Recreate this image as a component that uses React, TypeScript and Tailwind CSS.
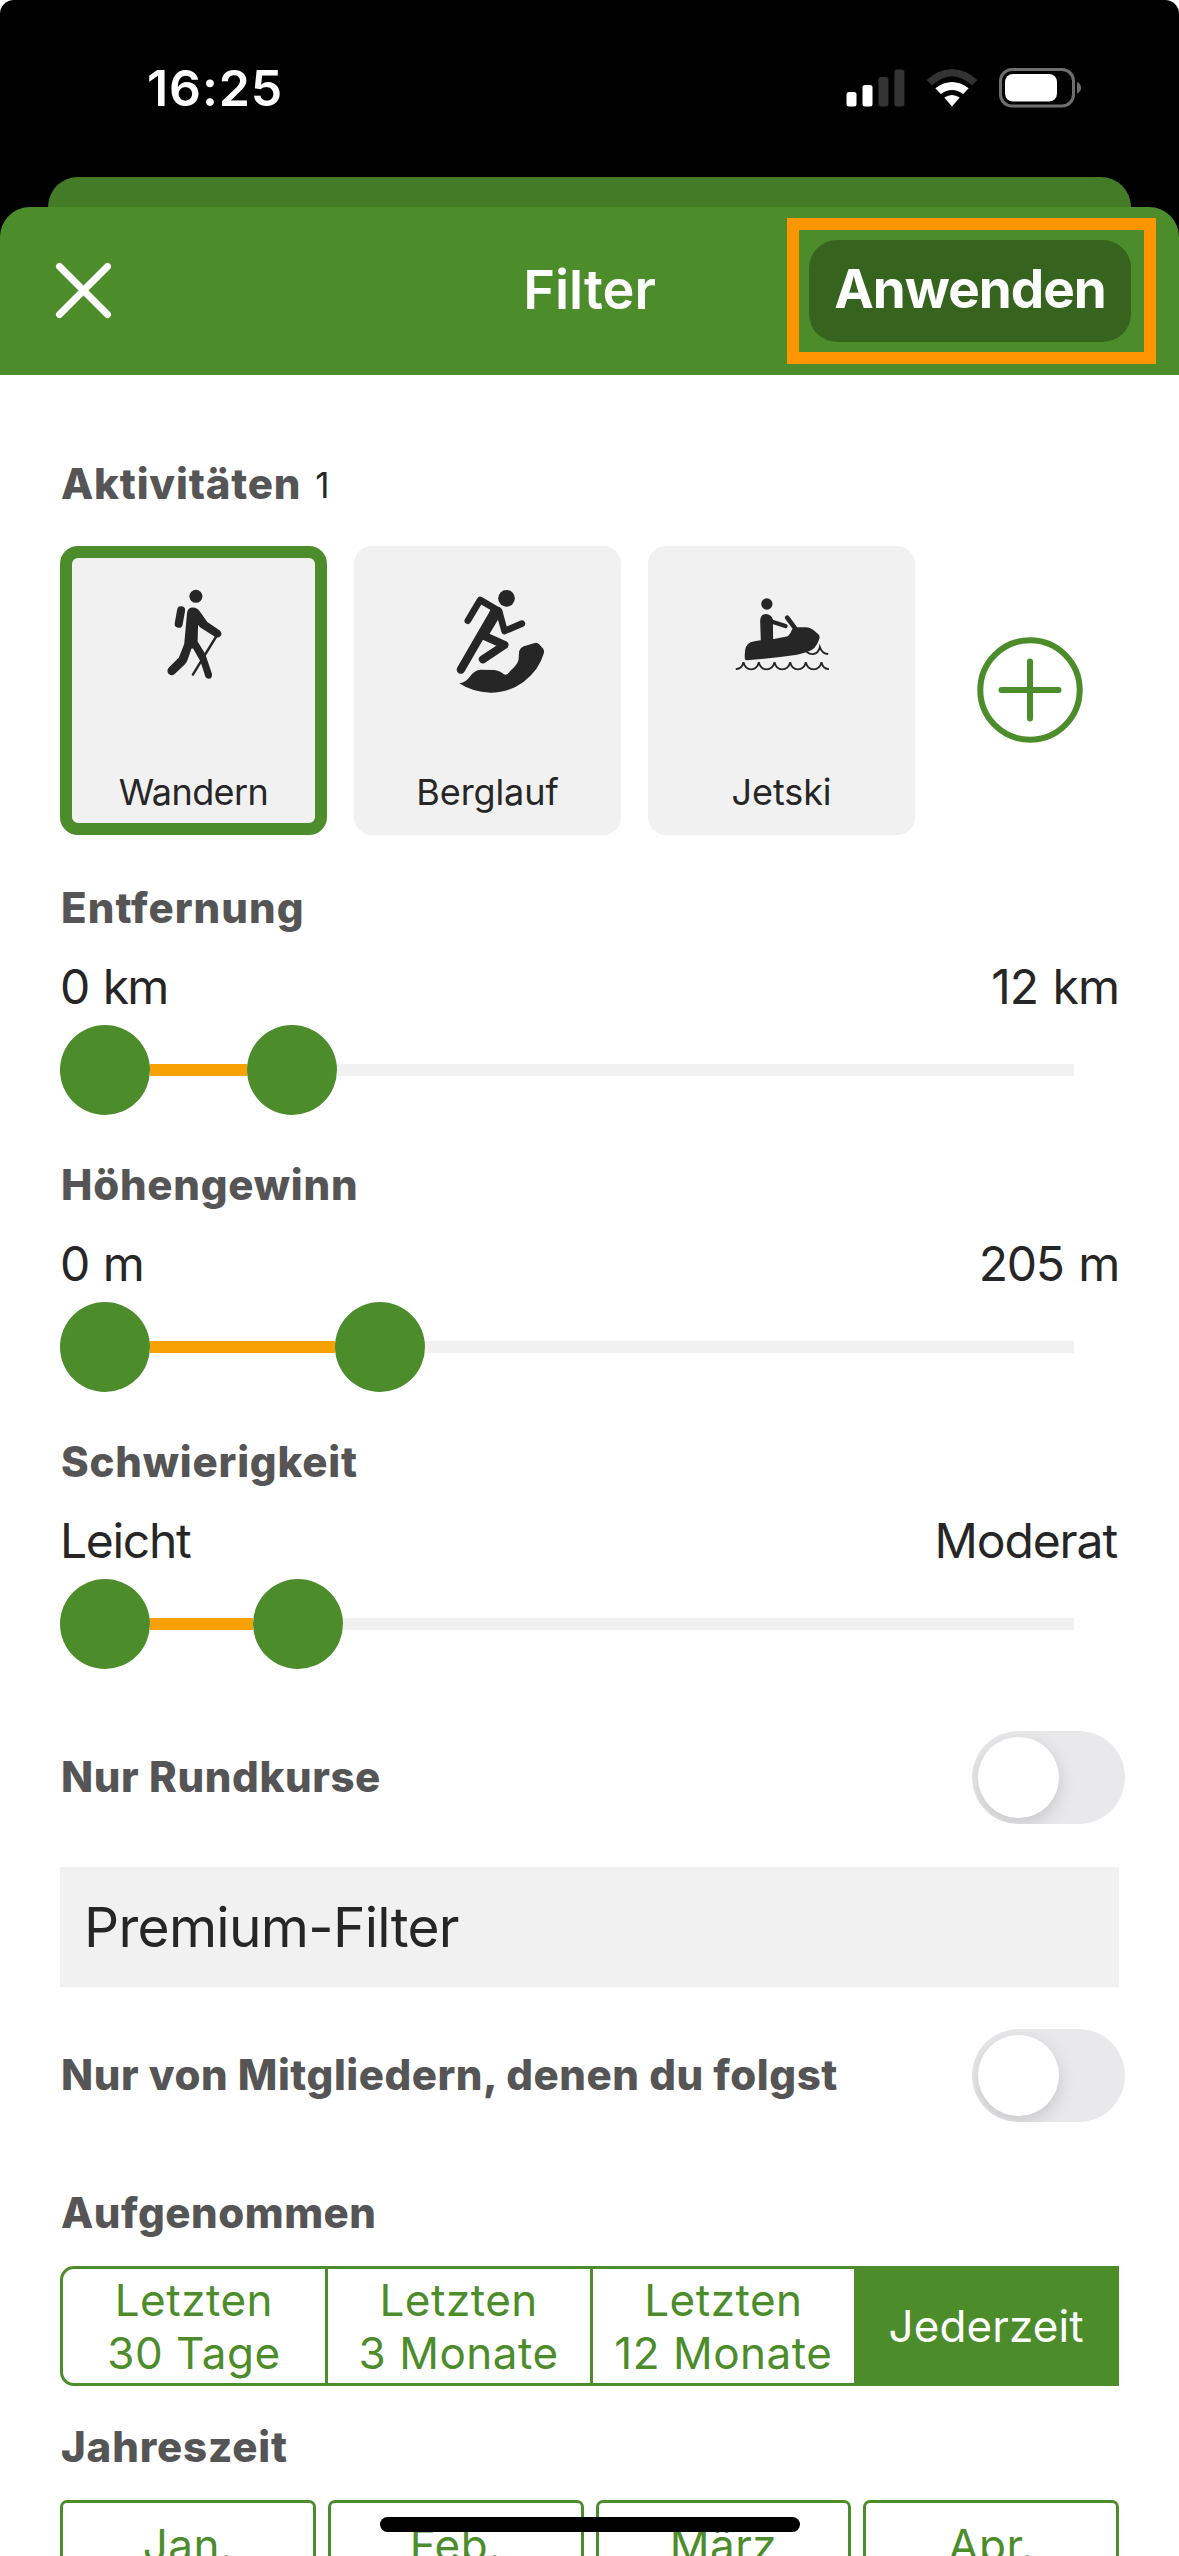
import type { ReactNode } from "react"
import clsx from "clsx"

const ranges = [
  { title: "Entfernung", titleClass: "tracking-[1.05px]", from: "0 km", fromClass: "tracking-[-2px] [word-spacing:3px]", to: "12 km", toClass: "tracking-[-1px] [word-spacing:2px]", end: 187 },
  { title: "Höhengewinn", titleClass: "tracking-[0.75px]", from: "0 m", fromClass: "tracking-[-2px] [word-spacing:3px]", to: "205 m", toClass: "tracking-[-1.2px] [word-spacing:2px]", end: 275 },
  { title: "Schwierigkeit", titleClass: "tracking-[0.8px]", from: "Leicht", fromClass: "tracking-[-1.3px]", to: "Moderat", toClass: "mr-0.5 tracking-[-1.1px]", end: 193 },
]

const periods = [
  { lines: ["Letzten", "30 Tage"] },
  { lines: ["Letzten", "3 Monate"] },
  { lines: ["Letzten", "12 Monate"] },
  { lines: ["Jederzeit"], active: true },
]

const months = ["Jan.", "Feb.", "März", "Apr."]

function HikerIcon() {
  return (
    <svg className="h-[120px] w-[120px]" viewBox="133.5 582 120 120" fill="currentColor">
      <circle cx="195.4" cy="596.3" r="6.5" />
      <path d="M180.6 610.2 178.2 623.8" stroke="currentColor" strokeWidth="8" strokeLinecap="round" />
      <path d="M186.6 612.5Q187.4 607.4 192.5 607.4 196.5 607.4 199 611L206.8 622 219 630.2Q222.4 633.3 220 636 217.6 638.7 214 636.6L199.5 627.2 197.6 624.8 197.1 641.5 204.8 654 211.5 674Q211.8 678.8 208.3 678.8 205.2 678.6 204.4 675.2L200 661.5 192.6 648.4H191L187 660Q186.3 662.5 184.5 664.2L174.2 674Q170.5 676.5 168 673.7 165.700 670.8 168.4 667.6L178.4 657.6 183.7 644Z" />
      <path d="M216 636 192.400 674.6" stroke="currentColor" strokeWidth="2.4" strokeLinecap="round" />
    </svg>
  )
}

function MountainRunIcon() {
  return (
    <svg className="h-[120px] w-[120px]" viewBox="-37.5 36 360 360" fill="currentColor">
      <circle cx="198" cy="85" r="25" />
      <g fill="none" stroke="currentColor" strokeLinecap="round" strokeLinejoin="round">
        <path d="M82 152 119 90 172 121" strokeWidth="20" />
        <path d="M176 124 192 183 244 161" strokeWidth="20" />
        <path d="M132 198 192 225 127 268" strokeWidth="24" />
        <path d="M160 128 61 299" strokeWidth="25" />
      </g>
      <path d="M150 118 176 110Q187 117 186 132L172 150 147 192 124 198Z" />
      <path d="M56 340Q75 338 88 320 102 300 120 299L162 300Q182 304 190 313 201 317 209 303 230 285 234 270L236 243Q240 232 250 229L283 219Q291 217 296 223L307 235Q312 241 310 250 296 300 250 335 205 368 150 368 95 366 56 340Z" />
    </svg>
  )
}

function JetskiIcon() {
  return (
    <svg className="h-[120px] w-[120px]" viewBox="844.5 36 360 360" fill="currentColor">
      <circle cx="979" cy="102" r="17" />
      <path d="M961 214 959 152Q960 133 976 132 992 133 997 148L998 210Z" />
      <g fill="none" stroke="currentColor" strokeLinecap="round">
        <path d="M988 153 1035 168" strokeWidth="13" />
        <path d="M1040 143 1064 175" strokeWidth="14" />
        <path
          d="M888 297Q904 297 909 277 914 298 932 298 950 298 955 277 960 298 978 298 997 298 1002 277 1007 298 1025 298 1044 298 1049 277 1054 298 1072 298 1091 298 1096 277 1101 298 1119 298 1138 298 1143 277 1148 297 1163 297"
          strokeWidth="5.500"
        />
        <path d="M1100 247Q1108 253 1118 252 1134 250 1138 231 1144 250 1161 252" strokeWidth="5.500" />
      </g>
      <path d="M913 266Q910 225 930 217 945 212 961 211L1000 207 1042 199Q1050 192 1055 178 1060 172 1075 172H1098Q1112 172 1135 194 1139 200 1136 208 1126 240 1100 246L1070 254Q1000 264 920 271 914 271 913 266Z" />
    </svg>
  )
}

function SectionTitle({ children, className }: { children: ReactNode; className?: string }) {
  return (
    <h2 className={clsx("flex h-[62px] items-center pb-0.5 pl-px text-[42px] font-extrabold whitespace-pre text-[#555555]", className)}>
      {children}
    </h2>
  )
}

function ActivityCard({ label, icon, className, selected }: { label: string; icon: ReactNode; className: string; selected?: boolean }) {
  return (
    <div
      className={clsx(
        "flex h-[289px] w-[267px] flex-col items-center rounded-[18px] bg-[#f1f1f1] pt-9 text-[#262626]",
        selected && "inset-ring-[12px] inset-ring-[#4c8c2b]"
      )}
    >
      {icon}
      <span className={clsx("mt-[68px] text-[36px] leading-[44px]", className)}>{label}</span>
    </div>
  )
}

function Toggle() {
  return (
    <div className="-mr-1.5 flex h-[93px] w-[153px] items-center overflow-hidden rounded-full bg-[#e9e9eb] pl-1.5">
      <div className="h-[81px] w-[81px] rounded-full bg-white shadow-[0_6px_18px_rgba(0,0,0,0.15)]" />
    </div>
  )
}

export default function App() {
  return (
    <div className="relative flex h-[2556px] w-[1179px] flex-col overflow-hidden bg-white font-[Inter,sans-serif]">

      {/* Status bar */}
      <div className="rounded-t-[14px] bg-black">
        <div className="flex h-[177px] items-center justify-between pl-[147px] pr-[97px]">
          <span className="pb-0.5 text-[50px] leading-[50px] font-semibold tracking-[0.9px] text-white">16:25</span>
          <div className="flex items-center pb-0.5">
            <svg className="h-[38px] w-[60px]" viewBox="0 0 60 38" fill="#fff">
              <rect x="0.500" y="23" width="10" height="14.500" rx="2.500" />
              <rect x="16.500" y="16" width="10" height="21.500" rx="2.500" />
              <rect x="32.400" y="8" width="10" height="29.500" rx="2.500" fill="#333" />
              <rect x="48.400" y="0.500" width="10" height="37" rx="2.500" fill="#333" />
            </svg>
            <svg className="ml-5 h-[38px] w-[52px]" viewBox="0 0 52 38">
              <path d="M0.500 11Q26-11 51.500 11L46 16.300Q26-1.500 6 16.300Z" fill="#333" />
              <path d="M9.300 19.300Q26 6.500 42.700 19.300L37.200 25Q26 17 14.800 25Z" fill="#fff" />
              <path d="M18.300 28.500Q26 23.500 33.700 28.500L26 37.500Z" fill="#fff" />
            </svg>
            <svg className="ml-[21px] h-[40px] w-[83px]" viewBox="0 0 83 40">
              <rect x="1.500" y="1.500" width="73" height="36.500" rx="11.500" fill="none" stroke="#6e6e6e" strokeWidth="3" />
              <rect x="6" y="6" width="52" height="27.500" rx="8" fill="#fff" />
              <path d="M78 14Q82 15.500 82 19.800 82 24 78 25.500Z" fill="#6e6e6e" />
            </svg>
          </div>
        </div>
        <div className="mx-12 h-[30px] rounded-t-[30px] bg-[#447b27]" />

        {/* Sheet header */}
        <div className="grid h-[168px] grid-cols-[1fr_auto_1fr] items-center rounded-t-[30px] bg-[#4c8c2b] text-white">
          <svg className="-mt-0.5 ml-[55px] h-[57px] w-[57px]" viewBox="0 0 57 57" fill="none" stroke="#fff" strokeWidth="7" strokeLinecap="round">
            <path d="M4.500 4.500 52.500 52.500M52.500 4.500 4.500 52.500" />
          </svg>
          <h1 className="pb-1 text-[54px] font-semibold">Filter</h1>
          <div className="mr-[23px] flex h-[146px] w-[369px] items-center justify-self-end border-[12px] border-[#ff9500] pl-2.5">
            <button className="h-[102px] w-[322px] rounded-[28px] bg-[#36641f] pb-0.5 text-[53px] font-bold tracking-[-1px]">
              Anwenden
            </button>
          </div>
        </div>
      </div>

      <div className="px-[60px] pt-[78px]">

        {/* Activities */}
        <SectionTitle className="tracking-[0.8px]">
          Aktivitäten<span className="ml-3.5 pt-1 text-[35px] font-normal text-[#262626]">1</span>
        </SectionTitle>
        <div className="mt-[31px] flex items-center gap-[27px]">
          <ActivityCard label="Wandern" icon={<HikerIcon />} className="tracking-[-0.6px]" selected />
          <ActivityCard label="Berglauf" icon={<MountainRunIcon />} className="tracking-[-0.1px]" />
          <ActivityCard label="Jetski" icon={<JetskiIcon />} className="tracking-[-0.1px]" />
          <svg className="-mt-0.5 ml-[35px] h-[106px] w-[106px]" viewBox="0 0 106 106" fill="none" stroke="#4c8c2b" strokeWidth="6" strokeLinecap="round">
            <circle cx="53" cy="53" r="49.700" />
            <path d="M53 24.500V81.500M24.500 53H81.500" />
          </svg>
        </div>

        {/* Range sliders */}
        <div className="mt-[42px] flex flex-col gap-[39px]">
          {ranges.map((range) => (
            <section key={range.title}>
              <SectionTitle className={range.titleClass}>{range.title}</SectionTitle>
              <div className="mt-[19px] flex h-[58px] items-center justify-between text-[48px] text-[#262626]">
                <span className={range.fromClass}>{range.from}</span>
                <span className={range.toClass}>{range.to}</span>
              </div>
              <div className="mt-[9px] flex h-[90px] items-center">
                <div className="h-[90px] w-[90px] rounded-full bg-[#4c8c2b]" />
                <div className="h-3 bg-[#f7a104]" style={{ width: range.end - 90 }} />
                <div className="h-[90px] w-[90px] rounded-full bg-[#4c8c2b]" />
                <div className="mr-[45px] h-3 flex-1 bg-[#f1f1f1]" />
              </div>
            </section>
          ))}
        </div>

        <div className="mt-[62px] flex items-center justify-between">
          <SectionTitle className="tracking-[0.6px]">Nur Rundkurse</SectionTitle>
          <Toggle />
        </div>

        {/* Premium filters */}
        <div className="mt-[43px] flex h-[120px] items-center bg-[#f1f1f1] pl-6 text-[55px] tracking-[-0.7px] text-[#262626]">
          Premium-Filter
        </div>
        <div className="mt-[42px] flex items-center justify-between">
          <SectionTitle className="tracking-[0.52px]">Nur von Mitgliedern, denen du folgst</SectionTitle>
          <Toggle />
        </div>

        <SectionTitle className="mt-[60px] tracking-[0.5px]">Aufgenommen</SectionTitle>
        <div className="mt-[22px] grid h-[120px] grid-cols-4 text-center text-[44px] leading-[53px] text-[#4c8c2b]">
          {periods.map(({ lines, active }, i) => (
            <div
              key={i}
              className={clsx(
                "flex flex-col justify-center border-y-[3px] border-l-[3px] border-[#4c8c2b] pt-px first:rounded-l-[14px]",
                active ? "bg-[#4c8c2b] pr-1 tracking-[0.1px] text-white" : "tracking-[0.5px]"
              )}
            >
              {lines.map((line) => (
                <span key={line}>{line}</span>
              ))}
            </div>
          ))}
        </div>

        <SectionTitle className="mt-[30px] tracking-[0.83px]">Jahreszeit</SectionTitle>
        <div className="mt-[22px] grid grid-cols-4 gap-3 text-[44px] tracking-[0.5px] text-[#4c8c2b]">
          {months.map((month) => (
            <div key={month} className="flex h-[90px] items-center justify-center rounded-[7px] border-[3px] border-[#4c8c2b]">
              {month}
            </div>
          ))}
        </div>
      </div>

      {/* Home indicator */}
      <div className="absolute top-[2517px] left-[380px] h-[15px] w-[420px] rounded-full bg-black" />
    </div>
  )
}
